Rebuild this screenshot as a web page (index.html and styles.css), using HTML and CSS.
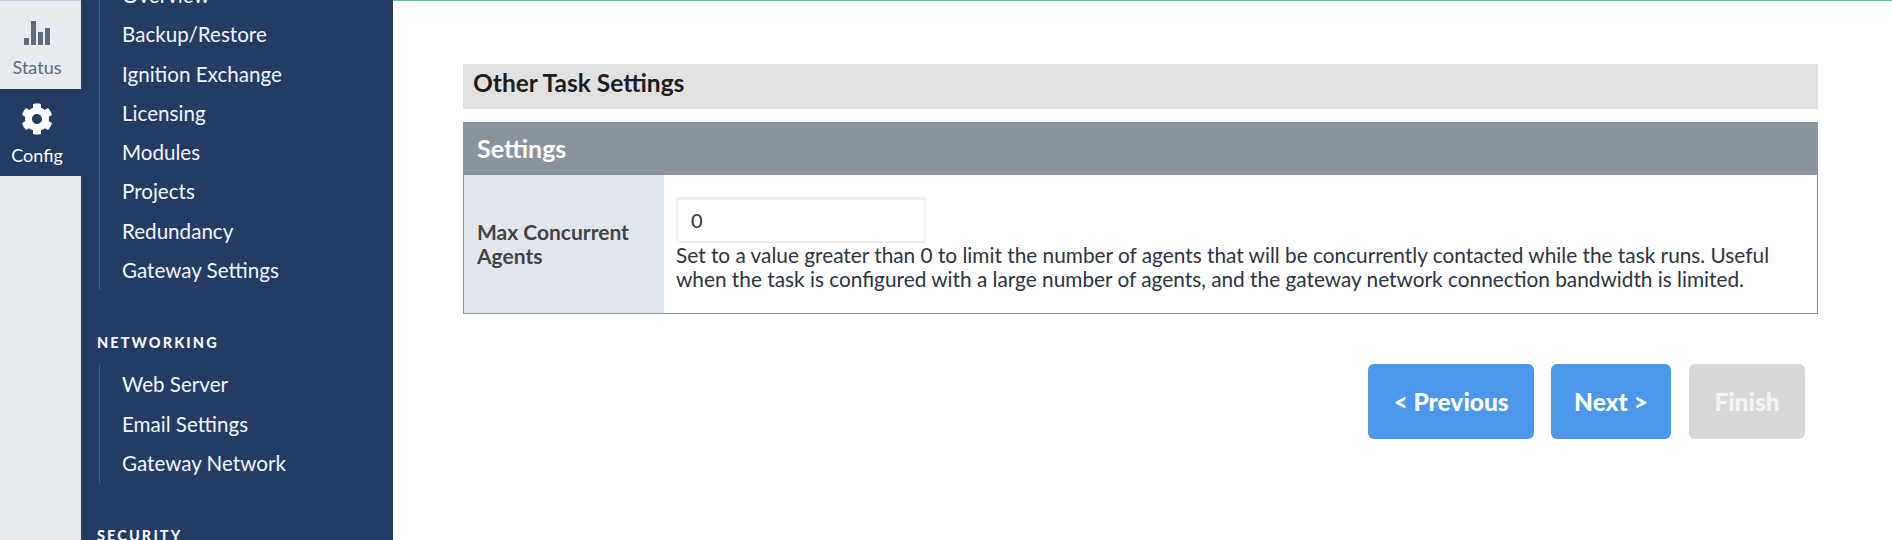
FILE: index.html
```html
<!DOCTYPE html>
<html lang="en">
<head>
<meta charset="utf-8">
<title>Other Task Settings</title>
<link rel="stylesheet" href="styles.css">
</head>
<body>
<div class="app">
  <nav class="rail">
    <a class="rail-tab status">
      <svg class="rail-icon" width="26" height="24" viewBox="0 0 26 24"><rect x="0" y="17" width="5" height="7"/><rect x="7" y="0" width="5" height="24"/><rect x="14" y="11" width="5" height="13"/><rect x="21" y="7" width="5" height="17"/></svg>
      <span>Status</span>
    </a>
    <a class="rail-tab config">
      <svg class="rail-icon" width="32" height="32" viewBox="0 0 512 512"><path d="M487.4 315.7l-42.6-24.6c4.3-23.2 4.3-47 0-70.2l42.6-24.6c4.9-2.8 7.1-8.6 5.5-14-11.1-35.6-30-67.8-54.7-94.6-3.8-4.1-10-5.1-14.8-2.3L380.8 110c-17.9-15.4-38.5-27.3-60.8-35.1V25.8c0-5.6-3.9-10.5-9.4-11.7-36.7-8.2-74.3-7.8-109.2 0-5.5 1.2-9.4 6.1-9.4 11.7V75c-22.2 7.9-42.8 19.8-60.8 35.1L88.7 85.5c-4.9-2.8-11-1.9-14.8 2.3-24.7 26.7-43.6 58.9-54.7 94.6-1.7 5.4.6 11.2 5.5 14L67.3 221c-4.3 23.2-4.3 47 0 70.2l-42.6 24.6c-4.9 2.8-7.1 8.6-5.5 14 11.1 35.6 30 67.8 54.7 94.6 3.8 4.1 10 5.1 14.8 2.3l42.6-24.6c17.9 15.4 38.5 27.3 60.8 35.1v49.2c0 5.6 3.9 10.5 9.4 11.7 36.7 8.2 74.3 7.8 109.2 0 5.5-1.2 9.4-6.1 9.4-11.7v-49.2c22.2-7.9 42.8-19.8 60.8-35.1l42.6 24.6c4.9 2.8 11 1.9 14.8-2.3 24.7-26.7 43.6-58.9 54.7-94.6 1.5-5.5-.7-11.3-5.6-14.1zM256 336c-44.1 0-80-35.9-80-80s35.9-80 80-80 80 35.9 80 80-35.9 80-80 80z"/></svg>
      <span>Config</span>
    </a>
  </nav>
  <aside class="sidebar">
    <div class="sidebar-scroll">
      <ul class="menu">
        <li>Overview</li>
        <li>Backup/Restore</li>
        <li>Ignition Exchange</li>
        <li>Licensing</li>
        <li>Modules</li>
        <li>Projects</li>
        <li>Redundancy</li>
        <li>Gateway Settings</li>
      </ul>
      <h3 class="menu-title">NETWORKING</h3>
      <ul class="menu">
        <li>Web Server</li>
        <li>Email Settings</li>
        <li>Gateway Network</li>
      </ul>
      <h3 class="menu-title">SECURITY</h3>
    </div>
  </aside>
  <main class="content">
    <h2 class="page-title">Other Task Settings</h2>
    <section class="panel">
      <h3 class="panel-head">Settings</h3>
      <div class="row">
        <label class="row-label" for="agents">Max Concurrent Agents</label>
        <div class="row-body">
          <input class="field" id="agents" type="text" value="0">
          <p class="help">Set to a value greater than 0 to limit the number of agents that will be concurrently contacted while the task runs. Useful when the task is configured with a large number of agents, and the gateway network connection bandwidth is limited.</p>
        </div>
      </div>
    </section>
    <div class="actions">
      <button class="btn">&lt; Previous</button>
      <button class="btn next">Next &gt;</button>
      <button class="btn disabled">Finish</button>
    </div>
  </main>
</div>
</body>
</html>
```
FILE: styles.css
```css
* { box-sizing: border-box; }
html, body { margin: 0; height: 540px; overflow: hidden; }
body { font-family: "Lato", "Noto Sans", sans-serif; background: #fff; }
.app { display: flex; height: 540px; }

.rail { width: 81px; flex: none; background: #e8ebf0; border-top: 1px solid #c5cfdf; }
.rail-tab { display: flex; flex-direction: column; align-items: center; padding-right: 7px; font-size: 18px; line-height: 22px; }
.rail-tab.status { height: 88px; padding-top: 20px; color: #5f6b7c; gap: 11px; background: #e8ebf0; }
.rail-tab.config { height: 87px; padding-top: 14px; background: #243c64; color: #fff; gap: 9px; }
.rail-icon { fill: currentColor; display: block; }

.sidebar { width: 312px; flex: none; background: #243c64; color: #f2f5f8; overflow: hidden; }
.sidebar-scroll { margin-top: -24px; padding-left: 18px; }
.menu { list-style: none; margin: 0; padding: 0 0 0 22px; border-left: 1px solid #4a6088; }
.menu li { height: 39.3px; line-height: 38.5px; font-size: 20.6px; white-space: nowrap; }
.menu-title { margin: 39px 0 12px -2px; font-size: 14.5px; line-height: 27px; height: 24px; font-weight: 900; letter-spacing: 2.1px; }

.content { flex: 1; min-width: 0; border-top: 1px solid #4cd07d; padding: 63px 74px 0 70px; }
.page-title { margin: 0 0 13px; height: 45px; padding-left: 10px; background: #e1e1e1; color: #1e1e1e; font-size: 24.5px; line-height: 37px; font-weight: 700; }
.panel { border: 1px solid #8a949e; border-top: 0; }
.panel-head { margin: 0 -1px; height: 53px; padding-left: 14px; background: #8a949e; color: #fff; font-size: 25px; line-height: 53px; font-weight: 700; }
.row { display: flex; height: 138px; }
.row-label { width: 200px; flex: none; background: #e2e6ee; color: #444; padding: 0 13px; display: flex; align-items: center; font-size: 21px; line-height: 24px; font-weight: 700; }
.row-body { flex: 1; padding: 22px 12px 0; color: #2c3440; }
.field { display: block; width: 250px; height: 46px; padding: 0 13px; border: 2px solid #eef0f4; border-radius: 3px; box-shadow: inset 0 1px 1px #eef0f4; font: 20px "Lato", sans-serif; color: #333; background: #fff; }
.help { margin: 0; font-size: 20.8px; line-height: 24px; }

.actions { display: flex; justify-content: flex-end; margin-top: 50px; padding-right: 13px; }
.btn { height: 75px; width: 166px; border: 0; border-radius: 6px; background: #4d97ea; color: #fff; font: 900 24.5px "Lato", sans-serif; }
.btn.next { width: 120px; margin-left: 17px; }
.btn.disabled { width: 116px; margin-left: 18px; background: #d8d8d8; color: #f4f4f4; }
```
